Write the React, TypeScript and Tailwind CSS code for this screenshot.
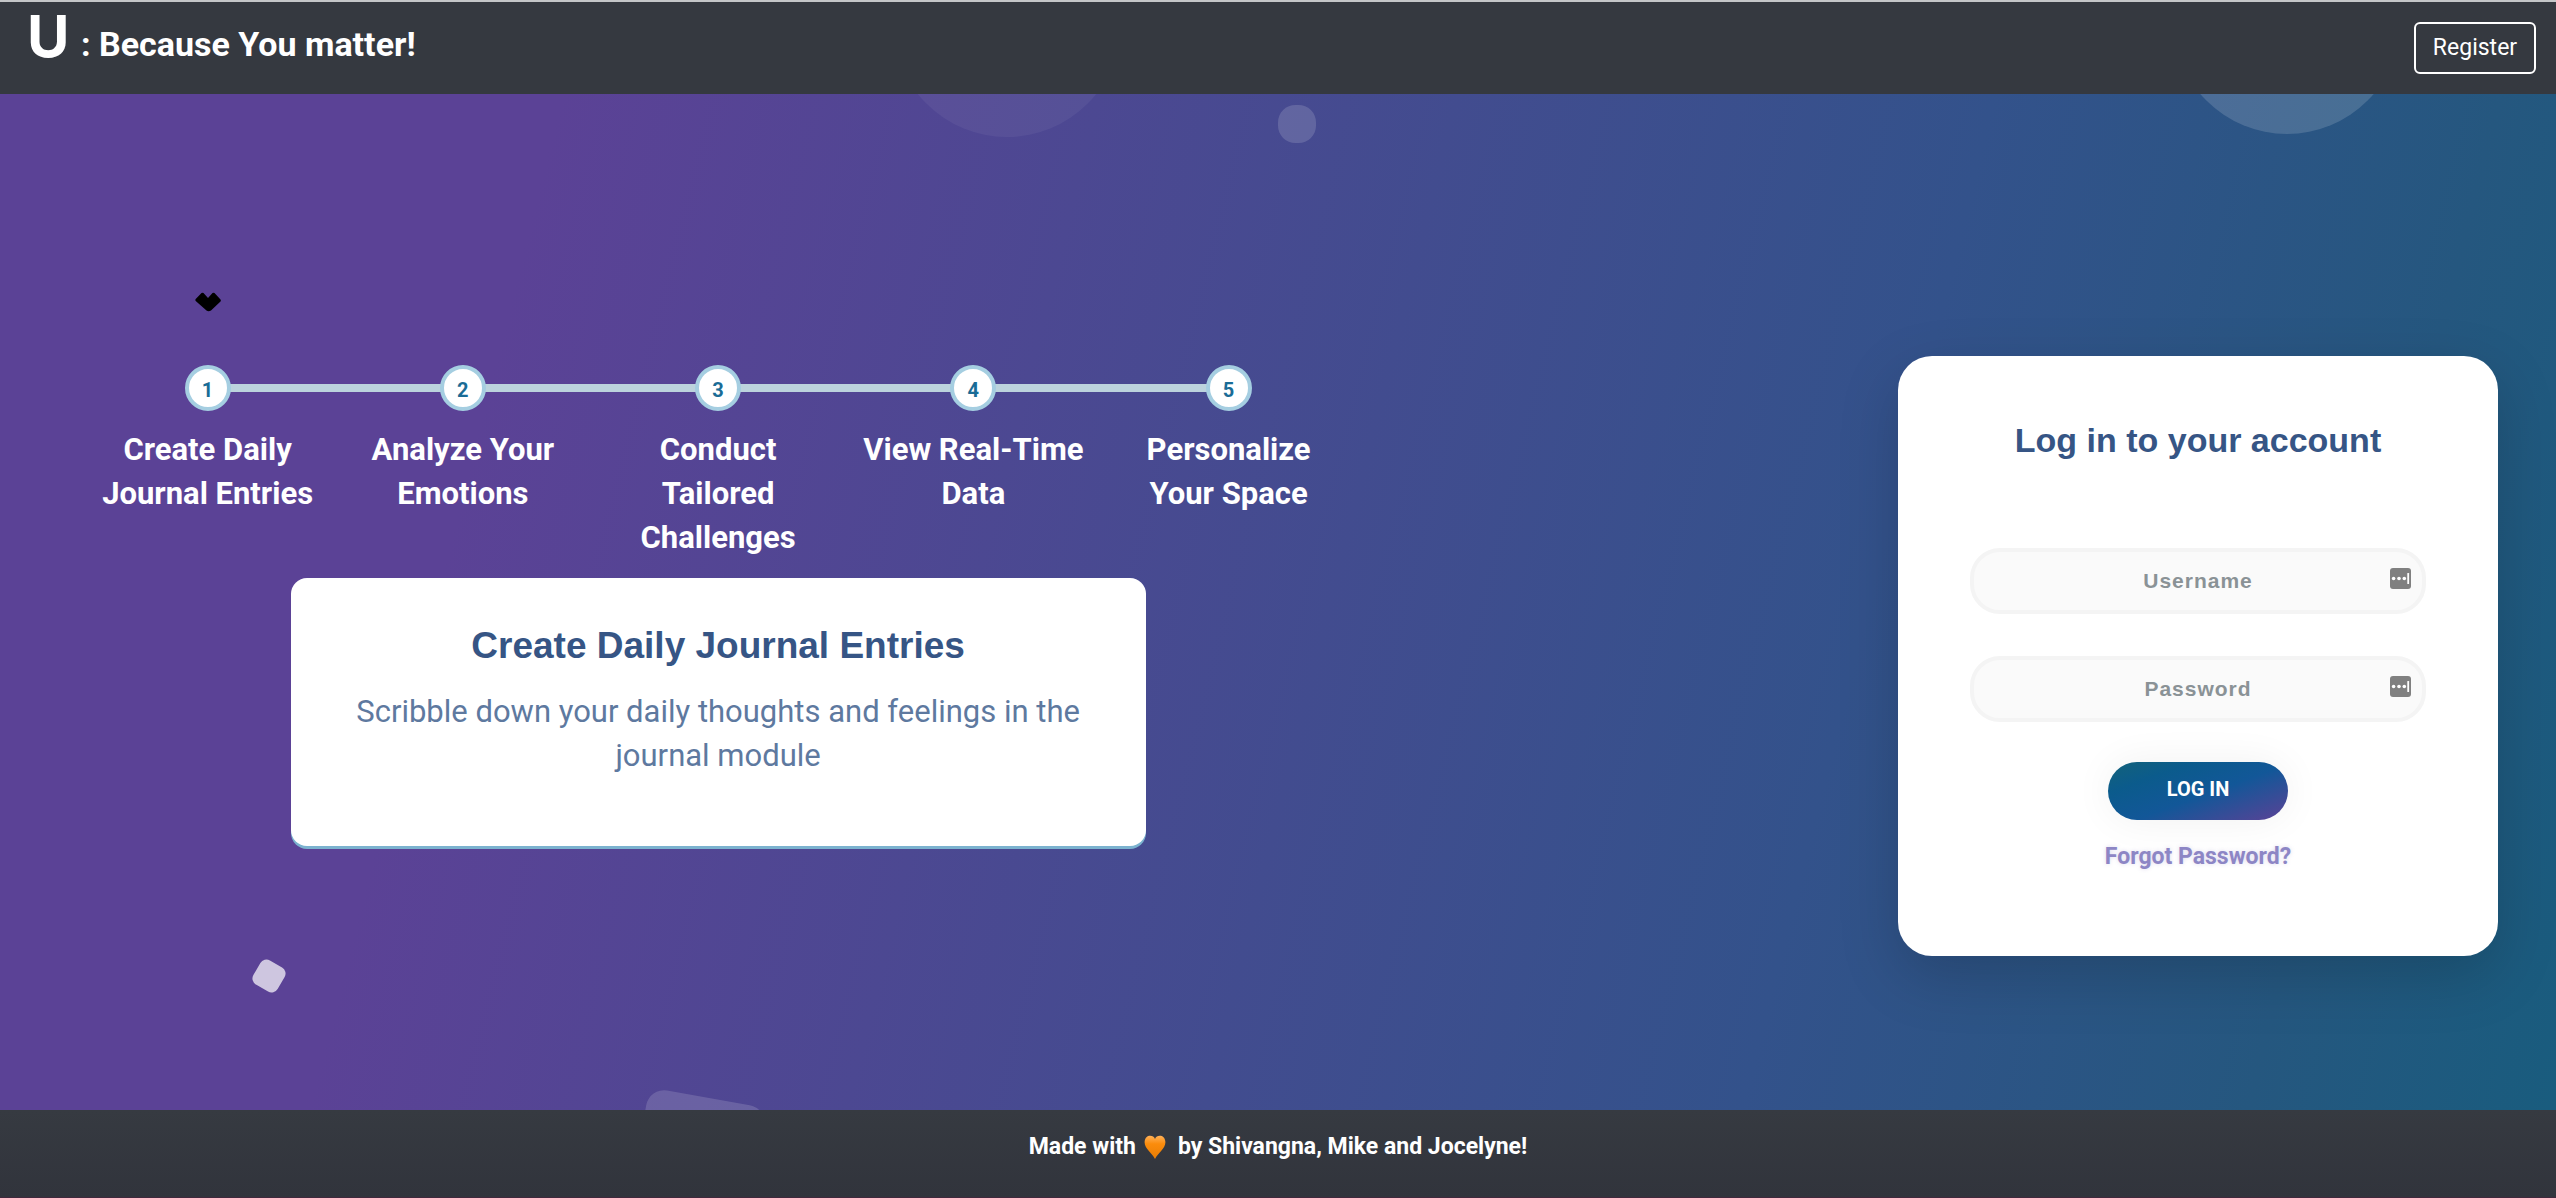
const steps = [
  "Create Daily Journal Entries",
  "Analyze Your Emotions",
  "Conduct Tailored Challenges",
  "View Real-Time Data",
  "Personalize Your Space",
];

function FieldIcon() {
  return (
    <svg viewBox="0 0 21 21" className="absolute right-[15px] top-5 size-[21px]" aria-hidden="true">
      <rect width="21" height="21" rx="3" fill="#808080" />
      <circle cx="3.6" cy="10.500" r="1.8" fill="#fff" />
      <circle cx="9" cy="10.500" r="1.8" fill="#fff" />
      <circle cx="14.300" cy="10.500" r="1.8" fill="#fff" />
      <rect x="17.300" y="5" width="1.8" height="11" rx=".5" fill="#fff" />
    </svg>
  );
}

function Field({ label, type }: { label: string; type: string }) {
  return (
    <div className="relative w-full">
      <input
        aria-label={label}
        type={type}
        placeholder={label}
        className="block h-[66px] w-full rounded-[30px] border-4 border-[#f4f4f4] bg-[#fafafa] px-12 text-center font-['Liberation_Sans',sans-serif] text-[21px] font-bold tracking-[1px] text-gray-700 outline-none placeholder:text-[#8a9296] placeholder:opacity-100"
      />
      <FieldIcon />
    </div>
  );
}

export default function App() {
  return (
    <div className="flex min-h-screen flex-col font-['Roboto',sans-serif]">
      <header className="flex h-[94px] items-center justify-between border-t-2 border-[#c4c6c8] bg-[#353940] pl-[27px] pr-5 text-white">
        <a href="#" className="flex items-start pb-6 font-bold">
          <span className="w-[54px] font-['Inter',sans-serif] text-[58px] leading-[56px]">U</span>
          <span className="pt-4 text-[34px] leading-[40px]">: Because You matter!</span>
        </a>
        <button className="h-[52px] w-[122px] rounded-md border-2 border-white text-[23px]">Register</button>
      </header>

      <main className="relative flex grow items-start justify-between overflow-hidden bg-[linear-gradient(104deg,#5b4296_0%,#5b4296_20%,#33528b_71%,#25577f_89%,#195c7e_100%)]">
        <div aria-hidden="true" className="absolute left-[893px] top-[-185px] size-[228px] rounded-full bg-white/5" />
        <div aria-hidden="true" className="absolute left-[1278px] top-[11px] size-[38px] rounded-[46%] bg-white/15" />
        <div aria-hidden="true" className="absolute left-[2173px] top-[-188px] size-[228px] rounded-full bg-white/15" />
        <div aria-hidden="true" className="absolute left-[255px] top-[868px] size-[28px] rotate-[30deg] rounded-[7px] bg-white/70" />
        <div aria-hidden="true" className="absolute left-[638px] top-[1003px] size-[120px] rotate-[10deg] rounded-[18px] bg-white/15" />

        <section className="w-[54%] pl-20 pr-6 pt-[198px]">
          <div className="grid grid-cols-5">
            <div className="flex justify-center">
              <svg viewBox="0 0 26 20" className="h-5 w-[26px]" aria-hidden="true">
                <path d="M6.5 1 Q7.500 .3 8.500 1L13 6l4.500-5q1-.7 2 0l6 6.500q.7 1 0 2L16 18.500q-2.500 1.500-4.500 0L.7 9q-.7-1 0-2z" fill="#000" />
              </svg>
            </div>
          </div>
          <ol className="mt-[53px] grid grid-cols-5 text-white">
            {steps.map((step, i) => (
              <li key={step} className="relative flex flex-col items-center">
                {i > 0 && <span aria-hidden="true" className="absolute right-1/2 top-[19px] h-2 w-full bg-[#bcd3dd]" />}
                <button
                  aria-label={step}
                  className="relative z-10 flex size-[46px] items-center justify-center rounded-full border-4 border-[#a5cee1] bg-white pt-1 text-[20px] font-bold text-[#1a6c96]"
                >
                  {i + 1}
                </button>
                <span className="mt-[17px] max-w-[230px] text-center text-[31px] font-bold leading-[44px]">{step}</span>
              </li>
            ))}
          </ol>
          <article className="mx-auto mt-[18px] h-[268px] w-[67%] rounded-2xl bg-white px-10 pt-11 text-center shadow-[0_3px_0_#7bb2cf]">
            <h2 className="font-['Liberation_Sans',sans-serif] text-[37px] font-bold leading-[48px] text-[#365585]">Create Daily Journal Entries</h2>
            <p className="mt-5 text-[31px] leading-[44px] text-[#5e799f]">Scribble down your daily thoughts and feelings in the journal module</p>
          </article>
        </section>

        <form className="mr-[58px] mt-[262px] flex h-[600px] w-[600px] flex-col items-center rounded-[34px] bg-white px-[72px] pt-[62px] shadow-[0_20px_60px_rgba(0,0,0,0.17)]">
          <h1 className="font-['Liberation_Sans',sans-serif] text-[34px] font-bold leading-[44px] text-[#365585]">Log in to your account</h1>
          <div className="mt-[86px] flex w-full flex-col gap-[42px]">
            <Field label="Username" type="text" />
            <Field label="Password" type="password" />
          </div>
          <button
            type="button"
            className="mt-10 h-[58px] w-[180px] rounded-[29px] bg-[linear-gradient(160deg,#13627a_0%,#0b5b8c_25%,#125798_55%,#5b4296_100%)] pb-1 text-[20px] font-bold text-white shadow-[0_0_40px_rgba(0,0,0,0.06)]"
          >
            LOG IN
          </button>
          <a href="#" className="mt-5 text-[23px] font-bold leading-[34px] text-[#8d86c5] [text-shadow:0_0_4px_rgba(141,134,197,0.3)]">Forgot Password?</a>
        </form>
      </main>

      <footer className="flex h-[88px] items-start justify-center border-b border-[#40283c] bg-linear-to-b from-[#363a41] to-[#31343c] pt-5 text-[23px] font-bold leading-[34px] text-white">
        <p className="flex items-center gap-2">
          <span>Made with</span>
          <svg viewBox="0 0 22 24" className="mr-1 h-6 w-[22px]" role="img" aria-label="love">
            <defs>
              <linearGradient id="heart" x1="0" y1="0" x2="0" y2="1">
                <stop offset="0" stopColor="#ffb057" />
                <stop offset=".35" stopColor="#fb8c0c" />
                <stop offset="1" stopColor="#e87d05" />
              </linearGradient>
            </defs>
            <path d="M11 4C9.500-.5 1-.8.6 7 .3 13.500 8 18 11 24c3-6 10.700-10.500 10.400-17C21-.8 12.500-.5 11 4z" fill="url(#heart)" />
          </svg>
          <span>by Shivangna, Mike and Jocelyne!</span>
        </p>
      </footer>
    </div>
  );
}
